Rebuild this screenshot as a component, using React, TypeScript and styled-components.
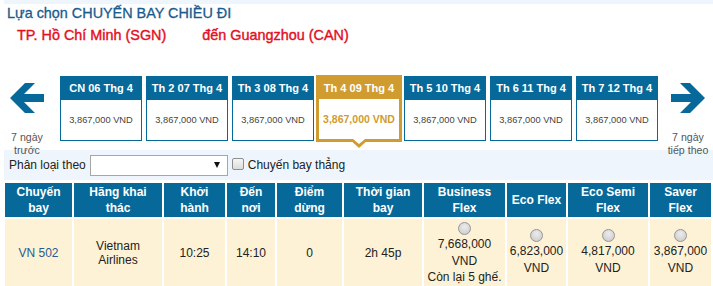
import React from 'react';
import styled, { createGlobalStyle } from 'styled-components';

const BLUE = '#066999';
const GOLD = '#d09c30';
const CREAM = '#fdf2d5';
const PALE = '#eef5fc';

type Day = { label: string; price: string; active?: boolean };

const days: Day[] = [
  { label: 'CN 06 Thg 4', price: '3,867,000 VND' },
  { label: 'Th 2 07 Thg 4', price: '3,867,000 VND' },
  { label: 'Th 3 08 Thg 4', price: '3,867,000 VND' },
  { label: 'Th 4 09 Thg 4', price: '3,867,000 VND', active: true },
  { label: 'Th 5 10 Thg 4', price: '3,867,000 VND' },
  { label: 'Th 6 11 Thg 4', price: '3,867,000 VND' },
  { label: 'Th 7 12 Thg 4', price: '3,867,000 VND' },
];

const columns = [
  { lines: ['Chuyến', 'bay'], width: 67 },
  { lines: ['Hãng khai', 'thác'], width: 88 },
  { lines: ['Khởi', 'hành'], width: 61 },
  { lines: ['Đến', 'nơi'], width: 48 },
  { lines: ['Điểm', 'dừng'], width: 65 },
  { lines: ['Thời gian', 'bay'], width: 78 },
  { lines: ['Business', 'Flex'], width: 81 },
  { lines: ['Eco Flex'], width: 59 },
  { lines: ['Eco Semi', 'Flex'], width: 80 },
  { lines: ['Saver', 'Flex'], width: 61 },
];

const fares = [
  { price: '7,668,000', note: 'Còn lại 5 ghế.' },
  { price: '6,823,000' },
  { price: '4,817,000' },
  { price: '3,867,000' },
];

const App = () => {
  return (
    <Page>
      <GlobalStyle />
      <TopBand />
      <Title>Lựa chọn CHUYẾN BAY CHIỀU ĐI</Title>
      <Route>
        <span>TP. Hồ Chí Minh (SGN)</span>
        <span>đến Guangzhou (CAN)</span>
      </Route>

      <DateStrip>
        <Nav>
          <Arrow />
          <NavText>7 ngày<br />trước</NavText>
        </Nav>
        <Days>
          {days.map((d) => (
            <DayCard key={d.label} $active={d.active}>
              <DayHead $active={d.active}>{d.label}</DayHead>
              <DayPrice $active={d.active}>{d.price}</DayPrice>
            </DayCard>
          ))}
        </Days>
        <Nav $right>
          <Arrow $flip />
          <NavText>7 ngày<br />tiếp theo</NavText>
        </Nav>
      </DateStrip>

      <FilterBar>
        <FilterLabel>Phân loại theo</FilterLabel>
        <Select>
          <Caret />
        </Select>
        <Checkbox />
        <FilterLabel>Chuyến bay thẳng</FilterLabel>
      </FilterBar>

      <Table>
        <colgroup>
          {columns.map((c, i) => (
            <col key={i} style={{ width: c.width }} />
          ))}
        </colgroup>
        <thead>
          <tr>
            {columns.map((c, i) => (
              <HeadCell key={i}>
                {c.lines.map((l, j) => (
                  <div key={j}>{l}</div>
                ))}
              </HeadCell>
            ))}
          </tr>
        </thead>
        <tbody>
          <tr>
            <Cell><FlightNo>VN 502</FlightNo></Cell>
            <Cell>Vietnam<br />Airlines</Cell>
            <Cell>10:25</Cell>
            <Cell>14:10</Cell>
            <Cell>0</Cell>
            <Cell>2h 45p</Cell>
            {fares.map((f) => (
              <FareCell key={f.price}>
                <Radio />
                <div>{f.price}</div>
                <div>VND</div>
                {f.note && <Note>{f.note}</Note>}
              </FareCell>
            ))}
          </tr>
        </tbody>
      </Table>
    </Page>
  );
};

const Arrow = ({ $flip }: { $flip?: boolean }) => (
  <ArrowSvg $flip={$flip} width="34" height="30" viewBox="0 0 34 30">
    <polygon
      points="0,15 15,0 25,0 14,11 34,11 34,19 14,19 25,30 15,30"
      fill={BLUE}
    />
  </ArrowSvg>
);

const GlobalStyle = createGlobalStyle`
  html, body {
    margin: 0;
    padding: 0;
    background: #fff;
    overflow: hidden;
  }
  body {
    font-family: 'Liberation Sans', Arial, sans-serif;
  }
`;

const Page = styled.div`
  width: 713px;
  height: 286px;
  overflow: hidden;
`;

const TopBand = styled.div`
  height: 4px;
  margin-left: 4px;
  background: ${PALE};
`;

const Title = styled.div`
  padding-left: 7px;
  height: 18px;
  line-height: 18px;
  font-size: 14.4px;
  color: #1a5b8c;
  -webkit-text-stroke: 0.3px #1a5b8c;
`;

const Route = styled.div`
  display: flex;
  gap: 36px;
  margin-top: 3px;
  padding-left: 17px;
  height: 20px;
  line-height: 20px;
  font-size: 14.4px;
  color: #e3101f;
  -webkit-text-stroke: 0.4px #e3101f;
`;

const DateStrip = styled.div`
  display: flex;
  align-items: flex-start;
  height: 75px;
  margin-top: 30px;
`;

const Nav = styled.div<{ $right?: boolean }>`
  width: ${({ $right }) => ($right ? '50px' : '54px')};
  margin-left: ${({ $right }) => ($right ? '5px' : '0')};
  margin-right: ${({ $right }) => ($right ? '0' : '6px')};
  display: flex;
  flex-direction: column;
  align-items: center;
  padding-top: 8px;
  flex-shrink: 0;
`;

const ArrowSvg = styled.svg<{ $flip?: boolean }>`
  display: block;
  transform: ${({ $flip }) => ($flip ? 'scaleX(-1)' : 'none')};
`;

const NavText = styled.div`
  margin-top: 18px;
  font-size: 10.6px;
  line-height: 13px;
  color: #555;
  text-align: center;
  white-space: nowrap;
`;

const Days = styled.div`
  display: flex;
  align-items: flex-start;
  gap: 4px;
`;

const DayCard = styled.div<{ $active?: boolean }>`
  position: relative;
  box-sizing: border-box;
  display: flex;
  flex-direction: column;
  width: ${({ $active }) => ($active ? '86px' : '82px')};
  height: ${({ $active }) => ($active ? '67px' : '65px')};
  margin: ${({ $active }) => ($active ? '0 -2px' : '1px 0 0')};
  border: ${({ $active }) => ($active ? `3px solid ${GOLD}` : `1px solid ${BLUE}`)};
  background: #fff;

  ${({ $active }) =>
    $active &&
    `
    &::before, &::after {
      content: '';
      position: absolute;
      left: 50%;
      top: 100%;
      width: 0;
      height: 0;
      border-style: solid;
      border-color: transparent;
    }
    &::before {
      margin-left: -10px;
      border-width: 9px 10px 0;
      border-top-color: ${GOLD};
    }
    &::after {
      margin-left: -6px;
      border-width: 5px 6px 0;
      border-top-color: #fff;
    }
  `}
`;

const DayHead = styled.div<{ $active?: boolean }>`
  height: ${({ $active }) => ($active ? '21px' : '23px')};
  line-height: ${({ $active }) => ($active ? '21px' : '23px')};
  background: ${({ $active }) => ($active ? GOLD : BLUE)};
  color: #fff;
  font-size: 11px;
  font-weight: bold;
  text-align: center;
  white-space: nowrap;
`;

const DayPrice = styled.div<{ $active?: boolean }>`
  flex: 1;
  display: flex;
  align-items: center;
  justify-content: center;
  font-size: ${({ $active }) => ($active ? '10.5px' : '9.3px')};
  font-weight: ${({ $active }) => ($active ? 'bold' : 'normal')};
  color: ${({ $active }) => ($active ? GOLD : '#444')};
  white-space: nowrap;
`;

const FilterBar = styled.div`
  display: flex;
  align-items: center;
  height: 30px;
  margin-left: 4px;
  padding-left: 5px;
  background: ${PALE};
`;

const FilterLabel = styled.span`
  font-size: 12px;
  color: #222;
  white-space: nowrap;
`;

const Select = styled.div`
  box-sizing: border-box;
  display: flex;
  align-items: center;
  justify-content: flex-end;
  width: 138px;
  height: 21px;
  margin: 0 4px;
  padding-right: 7px;
  border: 1px solid #a6a6a6;
  background: #fff;
`;

const Caret = styled.span`
  width: 0;
  height: 0;
  border-left: 3px solid transparent;
  border-right: 3px solid transparent;
  border-top: 6px solid #111;
`;

const Checkbox = styled.span`
  box-sizing: border-box;
  width: 12px;
  height: 12px;
  margin: -3px 4px 0 0;
  border: 1px solid #8e8e8e;
  border-radius: 2px;
  background: linear-gradient(#f6f6f6, #dcdcdc);
`;

const Table = styled.table`
  table-layout: fixed;
  border-collapse: separate;
  border-spacing: 2px;
  margin: 1px 0 0 3px;
  width: 710px;
`;

const HeadCell = styled.th`
  height: 34px;
  padding: 0;
  background: ${BLUE};
  color: #fff;
  font-size: 12px;
  font-weight: bold;
  line-height: 16px;
  text-align: center;
  vertical-align: middle;
`;

const Cell = styled.td`
  height: 68px;
  padding: 0;
  background: ${CREAM};
  color: #222;
  font-size: 12px;
  line-height: 14px;
  text-align: center;
  vertical-align: middle;
`;

const FareCell = styled(Cell)`
  line-height: 17px;
`;

const FlightNo = styled.span`
  color: #2b5b8d;
`;

const Radio = styled.span`
  display: block;
  box-sizing: border-box;
  width: 13px;
  height: 13px;
  margin: 0 auto 1px;
  border: 1px solid #959595;
  border-radius: 50%;
  background: radial-gradient(circle at 50% 35%, #ececec, #c8c8c8);
`;

const Note = styled.div`
  line-height: 15px;
  white-space: nowrap;
`;

export default App;
